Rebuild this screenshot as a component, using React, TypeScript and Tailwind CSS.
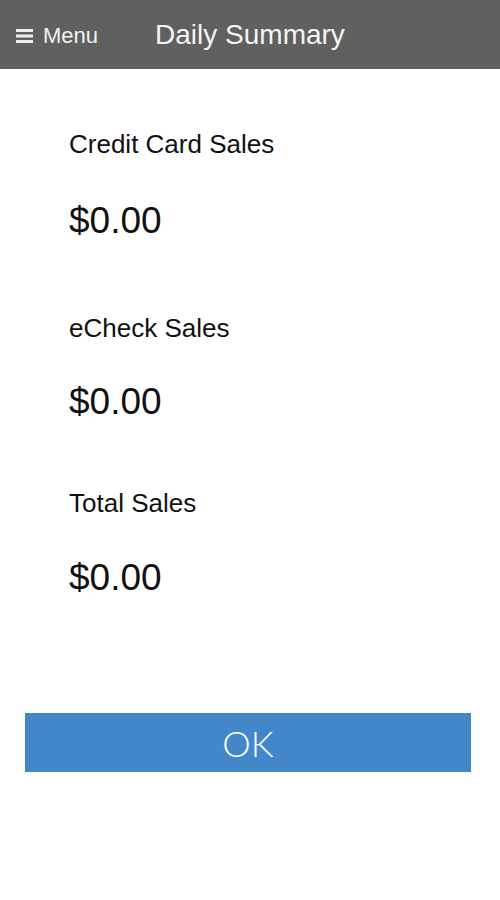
import React from "react";

const sections = [
  { label: "Credit Card Sales", value: "$0.00", mt: "mt-[62px]", gap: "mt-[45px]" },
  { label: "eCheck Sales", value: "$0.00", mt: "mt-[76px]", gap: "mt-[42px]" },
  { label: "Total Sales", value: "$0.00", mt: "mt-[70px]", gap: "mt-[43px]" },
];

export default function App() {
  return (
    <div className="w-[500px] h-[900px] bg-white flex flex-col" style={{ fontFamily: '"Liberation Sans", Arial, sans-serif' }}>
      <header className="h-[69px] bg-[#606060] flex items-center shrink-0">
        <div className="flex items-center ml-[16px] mt-[2px] gap-[9px] text-[#f2f2f2]">
          <svg width="18" height="16" viewBox="0 0 18 16" className="mt-[1px]">
            <rect x="0" y="1" width="17" height="3" fill="#ececec" />
            <rect x="0" y="6.5" width="17" height="3" fill="#ececec" />
            <rect x="0" y="12" width="17" height="3" fill="#ececec" />
          </svg>
          <span className="text-[22px] leading-none">Menu</span>
        </div>
        <h1 className="ml-[57px] text-[28px] leading-none text-[#f4f4f4] font-normal">Daily Summary</h1>
      </header>
      <main className="flex flex-col pl-[69px] text-[#111]">
        {sections.map((s) => (
          <div key={s.label} className={`flex flex-col ${s.mt}`}>
            <div className="text-[26px] leading-none h-[26px]">{s.label}</div>
            <div className={`text-[37px] leading-none h-[37px] ${s.gap}`}>{s.value}</div>
          </div>
        ))}
      </main>
      <div className="mt-[117px] pl-[25px]">
        <button
          className="w-[446px] h-[59px] bg-[#4487c8] text-white text-[36px] font-light flex items-center justify-center"
          style={{ fontFamily: 'Lato, "Open Sans", sans-serif' }}
        >
          OK
        </button>
      </div>
    </div>
  );
}
